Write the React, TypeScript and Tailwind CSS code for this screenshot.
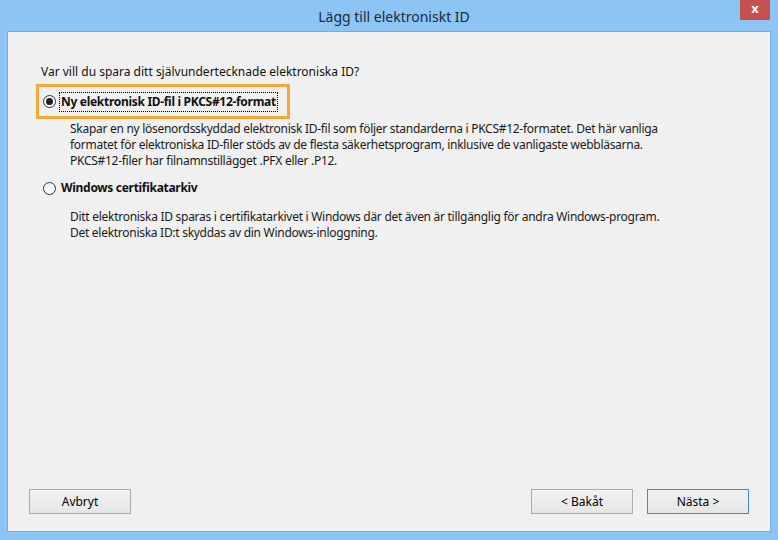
import React from "react";

const font = { fontFamily: '"Noto Sans", "Open Sans", sans-serif' };

function Radio({ checked }: { checked?: boolean }) {
  return (
    <span className="flex h-[13px] w-[13px] shrink-0 items-center justify-center rounded-full border border-[#333] bg-gradient-to-b from-[#f4f4f4] to-white">
      {checked && <span className="h-[7px] w-[7px] rounded-full bg-[#222]" />}
    </span>
  );
}

function Button({ label, active }: { label: string; active?: boolean }) {
  return (
    <button
      className={
        "h-[25px] w-[102px] border bg-gradient-to-b from-[#f2f2f2] to-[#e6e6e6] text-[12px] text-black " +
        (active ? "border-[#3c8be0]" : "border-[#acacac]")
      }
    >
      {label}
    </button>
  );
}

export default function App() {
  return (
    <div
      className="flex h-[540px] w-[778px] flex-col bg-[#8cc4f4] text-[#111]"
      style={font}
    >
      {/* Title bar */}
      <div className="grid h-[31px] grid-cols-[1fr_auto_1fr] pl-[18px] pr-[8px]">
        <div />
        <div className="self-center pt-[1px] text-[14px] text-[#1b2a3c]">
          Lägg till elektroniskt ID
        </div>
        <div className="flex justify-end">
          <div className="flex h-[20px] w-[30px] items-center justify-center bg-[#c75050] pb-[2px] text-[13px] font-bold text-white">
            x
          </div>
        </div>
      </div>

      {/* Client area */}
      <div className="mx-[7px] mb-[8px] flex flex-1 flex-col border border-[#74acdf] bg-[#f0f0f0] text-[12px] leading-[16px]">
        <div className="pl-[33px] pt-[32px]">
          <div>Var vill du spara ditt självundertecknade elektroniska ID?</div>

          <div className="ml-[-5px] mt-[4px] inline-flex h-[35px] items-center gap-[3px] border-[3px] border-[#f5a833] pl-[4px] pr-[9px]">
            <Radio checked />
            <span className="border border-dotted border-black px-[1px] py-[1px] font-bold tracking-[-0.3px]">
              Ny elektronisk ID-fil i PKCS#12-format
            </span>
          </div>

          <div className="ml-[29px] mt-[2px] tracking-[-0.28px] text-[#1a1a1a]">
            Skapar en ny lösenordsskyddad elektronisk ID-fil som följer standarderna i PKCS#12-formatet. Det här vanliga
            <br />
            formatet för elektroniska ID-filer stöds av de flesta säkerhetsprogram, inklusive de vanligaste webbläsarna.
            <br />
            PKCS#12-filer har filnamnstillägget .PFX eller .P12.
          </div>

          <div className="mt-[9px] flex h-[20px] items-center gap-[3px] pl-[2px]">
            <Radio />
            <span className="px-[2px] font-bold tracking-[-0.3px]">Windows certifikatarkiv</span>
          </div>

          <div className="ml-[29px] mt-[11px] tracking-[-0.28px] text-[#1a1a1a]">
            Ditt elektroniska ID sparas i certifikatarkivet i Windows där det även är tillgänglig för andra Windows-program.
            <br />
            Det elektroniska ID:t skyddas av din Windows-inloggning.
          </div>
        </div>

        <div className="mt-auto flex items-center px-[21px] pb-[17px]">
          <Button label="Avbryt" />
          <div className="flex-1" />
          <div className="flex gap-[14px]">
            <Button label="< Bakåt" />
            <Button label="Nästa >" active />
          </div>
        </div>
      </div>
    </div>
  );
}
